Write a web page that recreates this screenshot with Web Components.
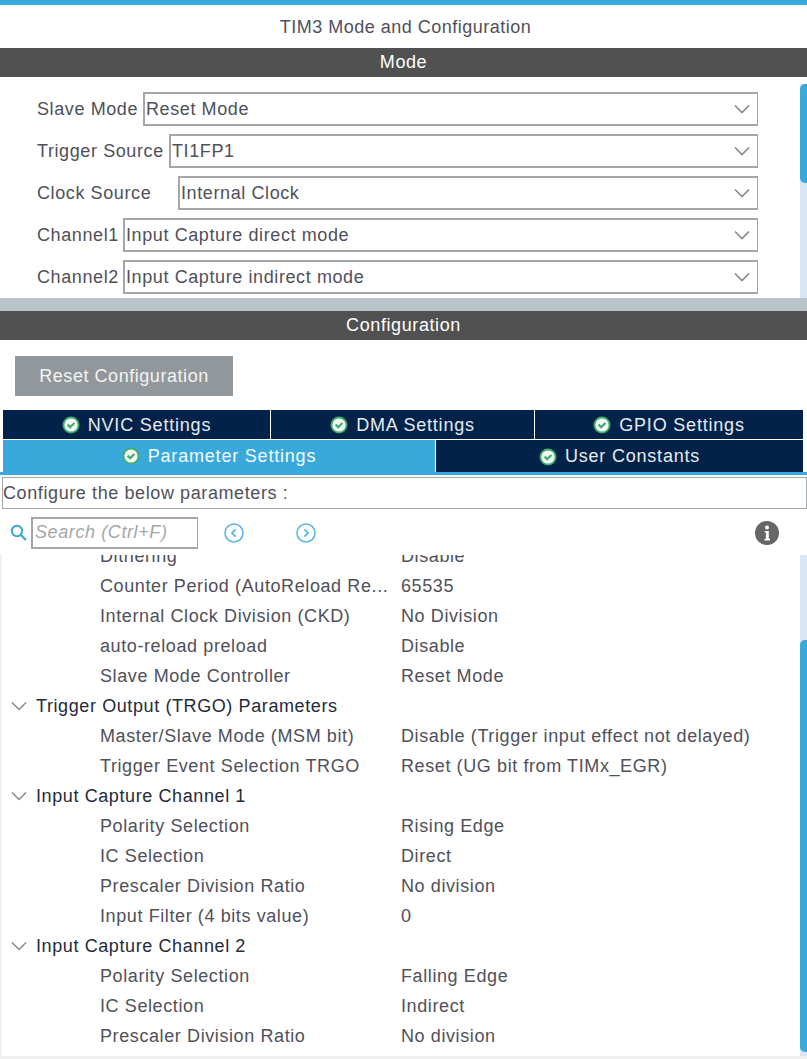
<!DOCTYPE html>
<html>
<head>
<meta charset="utf-8">
<title>TIM3 Mode and Configuration</title>
<style>
  html, body { margin: 0; padding: 0; background: #fff; }
  body { font-family: "Liberation Sans", Arial, sans-serif; font-size: 18px; letter-spacing: 0.6px; color: #50505a; overflow: hidden; height: 1059px; width: 807px; }
</style>
</head>
<body>
<tim-app></tim-app>

<script>
const CHECK_ICON = `
  <svg width="18" height="18" viewBox="0 0 18 18">
    <circle cx="9" cy="9" r="8.5" fill="#3fae6a"/>
    <circle cx="9" cy="9" r="6.6" fill="#f4f8f6"/>
    <path d="M5.6 8.6 L8.2 11.2 L12.4 6.9" fill="none" stroke="#3fae6a" stroke-width="2.2"/>
  </svg>`;

const CHEVRON = `
  <svg width="18" height="10" viewBox="0 0 18 10">
    <path d="M2 1.5 L9 8.5 L16 1.5" fill="none" stroke="#85898c" stroke-width="1.6"/>
  </svg>`;

class BarTitle extends HTMLElement {
  constructor() {
    super();
    this.attachShadow({ mode: "open" }).innerHTML = `
      <style>
        :host {
          display: flex;
          align-items: center;
          justify-content: center;
          height: 29px;
          background: #505150;
          color: #fff;
        }
      </style>
      <slot></slot>`;
  }
}

class ModeSelect extends HTMLElement {
  constructor() {
    super();
    this.attachShadow({ mode: "open" }).innerHTML = `
      <style>
        :host {
          display: flex;
          align-items: center;
          height: 34px;
        }
        .label { white-space: pre; }
        .box {
          flex: 1;
          height: 34px;
          box-sizing: border-box;
          display: flex;
          align-items: center;
          justify-content: space-between;
          border: 2px solid #a3a7aa;
          border-right-width: 1px;
          padding: 0 6px 0 1px;
        }
      </style>
      <span class="label"></span>
      <div class="box"><span><slot></slot></span>${CHEVRON}</div>`;
  }

  connectedCallback() {
    const label = this.shadowRoot.querySelector(".label");
    label.textContent = this.getAttribute("label");
    label.style.width = this.getAttribute("label-width") + "px";
  }
}

class ScrollTrack extends HTMLElement {
  constructor() {
    super();
    this.attachShadow({ mode: "open" }).innerHTML = `
      <style>
        :host {
          display: block;
          width: 7px;
          background: #d9e7f4;
          overflow: hidden;
        }
        .thumb {
          background: #39a9dc;
          border-radius: 5px 0 0 5px;
        }
      </style>
      <div class="thumb"></div>`;
  }

  connectedCallback() {
    const thumb = this.shadowRoot.querySelector(".thumb");
    thumb.style.marginTop = (this.getAttribute("offset") || 0) + "px";
    thumb.style.height = this.getAttribute("size") + "px";
  }
}

class ConfigTab extends HTMLElement {
  constructor() {
    super();
    this.attachShadow({ mode: "open" }).innerHTML = `
      <style>
        :host {
          display: flex;
          align-items: center;
          justify-content: center;
          gap: 8px;
          background: #022249;
          color: #e6ebf0;
          box-sizing: border-box;
          letter-spacing: 0.8px;
          padding-top: 1px;
        }
        :host([selected]) {
          background: #39a9dc;
          color: #f4fbff;
          padding-top: 0;
        }
      </style>
      ${CHECK_ICON}<span><slot></slot></span>`;
  }
}

class ParamGroup extends HTMLElement {
  constructor() {
    super();
    this.attachShadow({ mode: "open" }).innerHTML = `
      <style>
        :host {
          display: flex;
          align-items: center;
          height: 30px;
          color: #252a3a;
          gap: 8px;
          padding-left: 10px;
        }
      </style>
      <svg width="18" height="10" viewBox="0 0 18 10">
        <path d="M2 1.5 L9 8.5 L16 1.5" fill="none" stroke="#85898c" stroke-width="1.5"/>
      </svg>
      <span><slot></slot></span>`;
  }
}

class ParamRow extends HTMLElement {
  constructor() {
    super();
    this.attachShadow({ mode: "open" }).innerHTML = `
      <style>
        :host {
          display: grid;
          grid-template-columns: 301px 1fr;
          align-items: center;
          height: 30px;
          padding-left: 100px;
          white-space: nowrap;
        }
      </style>
      <span class="name"></span>
      <span class="value"></span>`;
  }

  connectedCallback() {
    this.shadowRoot.querySelector(".name").textContent = this.getAttribute("name");
    this.shadowRoot.querySelector(".value").textContent = this.getAttribute("value");
  }
}

class TimApp extends HTMLElement {
  constructor() {
    super();
    this.attachShadow({ mode: "open" }).innerHTML = `
      <style>
        :host {
          display: flex;
          flex-direction: column;
          height: 1059px;
          width: 807px;
        }
        .accent { height: 5px; background: #39a9dc; }
        .title {
          height: 42px;
          padding: 1px 0 0 4px;
          display: flex;
          align-items: center;
          justify-content: center;
          color: #50505a;
          letter-spacing: 0.5px;
        }
        .mode {
          display: flex;
          height: 221px;
        }
        .mode-rows {
          flex: 1;
          display: flex;
          flex-direction: column;
          gap: 8px;
          padding: 15px 42px 0 37px;
          overflow: hidden;
        }
        .mode scroll-track { margin-top: 7px; }
        .gutter { height: 13px; background: #b8c4c9; }
        .reset-wrap { padding: 16px 0 14px 15px; }
        .reset {
          width: 218px;
          height: 40px;
          display: flex;
          align-items: center;
          justify-content: center;
          background: #92979b;
          color: #f2f3f4;
          letter-spacing: 0.55px;
        }
        .tabs {
          display: flex;
          flex-direction: column;
          gap: 1px;
          padding: 0 4px 0 3px;
        }
        .row { display: flex; gap: 1px; }
        .row-a { height: 29px; }
        .row-b { height: 32px; }
        .row-a config-tab:nth-child(1) { width: 267px; }
        .row-a config-tab:nth-child(2) { width: 263px; }
        .row-a config-tab:nth-child(3) { flex: 1; }
        .row-b config-tab:first-child { width: 432px; }
        .row-b config-tab:last-child { flex: 1; }
        .tab-line { height: 3px; background: #39a9dc; }
        .configure {
          margin: 2px 0 0 2px;
          width: 805px;
          height: 32px;
          box-sizing: border-box;
          border: 1px solid #a3a7aa;
          display: flex;
          align-items: center;
        }
        .tools {
          display: flex;
          align-items: center;
          height: 45px;
          padding: 1px 28px 0 10px;
        }
        .search-box {
          margin-left: 3px;
          width: 167px;
          height: 32px;
          box-sizing: border-box;
          border: 2px solid #a3a7aa;
          border-right-width: 1px;
          display: flex;
          align-items: center;
          padding-left: 2px;
          font-style: italic;
          color: #a4a7aa;
        }
        .nav-prev { margin-left: 26px; }
        .nav-next { margin-left: 52px; }
        .info { margin-left: auto; }
        .params {
          flex: 1;
          min-height: 0;
          display: flex;
          border-bottom: 3px solid #f0f0f0;
          border-left: 2px solid #f0f0f0;
        }
        .param-list {
          flex: 1;
          overflow: hidden;
          min-width: 0;
        }
        .param-list > .shift { margin: -14px 0 0 -2px; }
      </style>
      <div class="accent"></div>
      <div class="title">TIM3 Mode and Configuration</div>
      <bar-title>Mode</bar-title>
      <div class="mode">
        <div class="mode-rows">
          <mode-select label="Slave Mode" label-width="106">Reset Mode</mode-select>
          <mode-select label="Trigger Source" label-width="132">TI1FP1</mode-select>
          <mode-select label="Clock Source" label-width="141">Internal Clock</mode-select>
          <mode-select label="Channel1" label-width="86">Input Capture direct mode</mode-select>
          <mode-select label="Channel2" label-width="86">Input Capture indirect mode</mode-select>
        </div>
        <scroll-track offset="0" size="99"></scroll-track>
      </div>
      <div class="gutter"></div>
      <bar-title>Configuration</bar-title>
      <div class="reset-wrap"><div class="reset">Reset Configuration</div></div>
      <div class="tabs">
        <div class="row row-a">
          <config-tab>NVIC Settings</config-tab>
          <config-tab>DMA Settings</config-tab>
          <config-tab>GPIO Settings</config-tab>
        </div>
        <div class="row row-b">
          <config-tab selected>Parameter Settings</config-tab>
          <config-tab>User Constants</config-tab>
        </div>
      </div>
      <div class="tab-line"></div>
      <div class="configure">Configure the below parameters :</div>
      <div class="tools">
        <svg width="18" height="18" viewBox="0 0 18 18">
          <circle cx="7" cy="7" r="5.2" fill="none" stroke="#39a9dc" stroke-width="2"/>
          <path d="M11 11 L16 16" stroke="#39a9dc" stroke-width="2.2"/>
        </svg>
        <div class="search-box">Search (Ctrl+F)</div>
        <svg class="nav-prev" width="20" height="20" viewBox="0 0 20 20">
          <circle cx="10" cy="10" r="9" fill="none" stroke="#5cb8e4" stroke-width="1.6"/>
          <path d="M11.6 6.4 L8 10 L11.6 13.6" fill="none" stroke="#5cb8e4" stroke-width="1.8"/>
        </svg>
        <svg class="nav-next" width="20" height="20" viewBox="0 0 20 20">
          <circle cx="10" cy="10" r="9" fill="none" stroke="#5cb8e4" stroke-width="1.6"/>
          <path d="M8.4 6.4 L12 10 L8.4 13.6" fill="none" stroke="#5cb8e4" stroke-width="1.8"/>
        </svg>
        <svg class="info" width="24" height="24" viewBox="0 0 24 24">
          <circle cx="12" cy="12" r="12" fill="#666"/>
          <circle cx="12" cy="6.4" r="2" fill="#fff"/>
          <path d="M9.8 10 H13.8 V17.8 H15 V19.4 H9.5 V17.8 H10.9 V11.6 H9.8 Z" fill="#fff"/>
        </svg>
      </div>
      <div class="params">
        <div class="param-list">
          <div class="shift">
            <param-row name="Dithering" value="Disable"></param-row>
            <param-row name="Counter Period (AutoReload Re..." value="65535"></param-row>
            <param-row name="Internal Clock Division (CKD)" value="No Division"></param-row>
            <param-row name="auto-reload preload" value="Disable"></param-row>
            <param-row name="Slave Mode Controller" value="Reset Mode"></param-row>
            <param-group>Trigger Output (TRGO) Parameters</param-group>
            <param-row name="Master/Slave Mode (MSM bit)" value="Disable (Trigger input effect not delayed)"></param-row>
            <param-row name="Trigger Event Selection TRGO" value="Reset (UG bit from TIMx_EGR)"></param-row>
            <param-group>Input Capture Channel 1</param-group>
            <param-row name="Polarity Selection" value="Rising Edge"></param-row>
            <param-row name="IC Selection" value="Direct"></param-row>
            <param-row name="Prescaler Division Ratio" value="No division"></param-row>
            <param-row name="Input Filter (4 bits value)" value="0"></param-row>
            <param-group>Input Capture Channel 2</param-group>
            <param-row name="Polarity Selection" value="Falling Edge"></param-row>
            <param-row name="IC Selection" value="Indirect"></param-row>
            <param-row name="Prescaler Division Ratio" value="No division"></param-row>
          </div>
        </div>
        <scroll-track offset="85" size="412"></scroll-track>
      </div>`;
  }
}

customElements.define("bar-title", BarTitle);
customElements.define("mode-select", ModeSelect);
customElements.define("scroll-track", ScrollTrack);
customElements.define("config-tab", ConfigTab);
customElements.define("param-group", ParamGroup);
customElements.define("param-row", ParamRow);
customElements.define("tim-app", TimApp);
</script>
</body>
</html>
